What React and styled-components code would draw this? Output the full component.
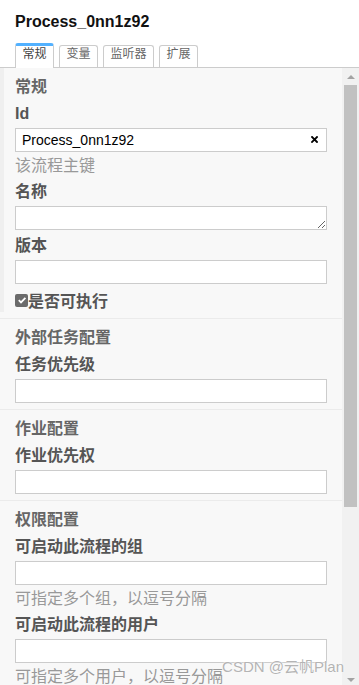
import React from "react";
import styled, { createGlobalStyle } from "styled-components";

const GlobalStyle = createGlobalStyle`
  html, body {
    margin: 0;
    padding: 0;
    background: #fff;
    overflow: hidden;
  }
  body {
    font-family: "Liberation Sans", "Noto Sans CJK SC", sans-serif;
  }
  * { box-sizing: border-box; }
`;

const Panel = styled.div`
  position: relative;
  height: 688px;
  display: flex;
  flex-direction: column;
  overflow: hidden;
`;

const Header = styled.div`
  padding: 13px 15px 0;
`;

const Title = styled.div`
  font-size: 16px;
  line-height: 18px;
  font-weight: bold;
  color: #111;
  margin-bottom: 12px;
`;

const TabBar = styled.div`
  display: flex;
  align-items: flex-end;
  gap: 5px;
  padding: 0 15px;
  border-bottom: 1px solid #ccc;
`;

const Tab = styled.div`
  font-size: 12px;
  line-height: 16px;
  padding: 0 6.5px ${(p) => (p.$active ? "6px" : "5px")};
  margin-bottom: ${(p) => (p.$active ? "-1px" : "0")};
  border: 1px solid #ccc;
  border-top: ${(p) => (p.$active ? "3px solid #52b1ff" : "1px solid #ccc")};
  border-bottom: none;
  border-radius: 3px 3px 0 0;
  background: #fff;
  color: ${(p) => (p.$active ? "#444" : "#666")};
`;

const Body = styled.div`
  flex: 1;
  min-height: 0;
  display: flex;
  background: #f8f8f8;
`;

const Content = styled.div`
  flex: 1;
  min-width: 0;
  overflow: hidden;
`;

const Group = styled.div`
  display: flex;
  border-bottom: 1px solid #ebebeb;
`;

const Toggle = styled.div`
  width: 4px;
  flex-shrink: 0;
  margin-bottom: 6px;
  background: ${(p) => (p.$active ? "#efefef" : "transparent")};
`;

const GroupBody = styled.div`
  flex: 1;
  min-width: 0;
  padding: 9px 15px 6px 11px;
`;

const GroupLabel = styled.div`
  font-size: 16px;
  line-height: 20px;
  font-weight: bold;
  color: #666;
  margin-bottom: 7px;
`;

const Entry = styled.div`
  margin-bottom: 6px;
  &:last-child { margin-bottom: 0; }
`;

const Label = styled.label`
  display: block;
  font-size: 16px;
  line-height: 20px;
  font-weight: bold;
  color: #555;
  margin-bottom: 4px;
`;

const FieldWrap = styled.div`
  position: relative;
`;

const TextInput = styled.input`
  display: block;
  width: 100%;
  height: 24px;
  margin: 0;
  padding: 0 ${(p) => (p.$clearable ? "24px" : "6px")} 0 6px;
  border: 1px solid #ccc;
  border-radius: 0;
  background: #fff;
  font-family: "Liberation Sans", "Noto Sans CJK SC", sans-serif;
  font-size: 14px;
  color: #000;
  outline: none;
`;

const TextArea = styled.textarea`
  display: block;
  width: 100%;
  height: 24px;
  margin: 0;
  padding: 2px 6px;
  border: 1px solid #ccc;
  border-radius: 0;
  background: #fff;
  font-family: "Liberation Sans", "Noto Sans CJK SC", sans-serif;
  font-size: 14px;
  resize: vertical;
  outline: none;
`;

const ClearButton = styled.span`
  position: absolute;
  right: 9px;
  top: 8px;
  width: 7px;
  height: 7px;
  display: flex;
`;

const Hint = styled.div`
  margin-top: 4px;
  font-size: 16px;
  line-height: 20px;
  color: #999;
`;

const CheckRow = styled.div`
  display: flex;
  align-items: center;
  height: 20px;
  margin: 3px 0 2px;
  font-size: 16px;
  font-weight: bold;
  color: #555;
`;

const CheckBox = styled.span`
  width: 13px;
  height: 13px;
  border-radius: 2px;
  background: #6b6b6b;
  display: flex;
  align-items: center;
  justify-content: center;
  flex-shrink: 0;
`;

const ScrollTrack = styled.div`
  width: 17px;
  flex-shrink: 0;
  display: flex;
  flex-direction: column;
  background: #f1f1f1;
`;

const ScrollButton = styled.div`
  height: 17px;
  display: flex;
  align-items: center;
  justify-content: center;
  &::after {
    content: "";
    border-left: 4px solid transparent;
    border-right: 4px solid transparent;
    ${(p) => (p.$down ? "border-top" : "border-bottom")}: 4px solid #a3a3a3;
  }
`;

const ThumbArea = styled.div`
  flex: 1;
`;

const Thumb = styled.div`
  height: 422px;
  margin: 0 2px;
  background: #c1c1c1;
`;

const Watermark = styled.div`
  position: absolute;
  right: 15px;
  top: 657px;
  font-size: 15px;
  line-height: 20px;
  color: #b4b4b4;
  text-shadow: 0 0 2px #fff, 0 0 1px #fff;
  white-space: nowrap;
`;

const ClearIcon = () => (
  <svg width="7" height="7" viewBox="0 0 7 7">
    <path d="M1 1L6 6M6 1L1 6" stroke="#000" strokeWidth="1.8" strokeLinecap="square" />
  </svg>
);

const CheckIcon = () => (
  <svg width="10" height="10" viewBox="0 0 10 10">
    <path d="M1.8 5.2L4 7.4L8.4 2.8" stroke="#fff" strokeWidth="1.8" fill="none" />
  </svg>
);

const tabs = ["常规", "变量", "监听器", "扩展"];

const Field = ({ label, hint, value, clearable }) => (
  <Entry>
    <Label>{label}</Label>
    <FieldWrap>
      <TextInput defaultValue={value} $clearable={clearable} />
      {clearable && (
        <ClearButton>
          <ClearIcon />
        </ClearButton>
      )}
    </FieldWrap>
    {hint && <Hint>{hint}</Hint>}
  </Entry>
);

export default function App() {
  return (
    <Panel>
      <GlobalStyle />
      <Header>
        <Title>Process_0nn1z92</Title>
      </Header>
      <TabBar>
        {tabs.map((t, i) => (
          <Tab key={t} $active={i === 0}>
            {t}
          </Tab>
        ))}
      </TabBar>

      <Body>
        <Content>
          <Group>
            <Toggle $active />
            <GroupBody>
              <GroupLabel>常规</GroupLabel>
              <Field label="Id" value="Process_0nn1z92" hint="该流程主键" clearable />
              <Entry>
                <Label>名称</Label>
                <TextArea />
              </Entry>
              <Field label="版本" />
              <Entry>
                <CheckRow>
                  <CheckBox>
                    <CheckIcon />
                  </CheckBox>
                  是否可执行
                </CheckRow>
              </Entry>
            </GroupBody>
          </Group>

          <Group>
            <Toggle />
            <GroupBody>
              <GroupLabel>外部任务配置</GroupLabel>
              <Field label="任务优先级" />
            </GroupBody>
          </Group>

          <Group>
            <Toggle />
            <GroupBody>
              <GroupLabel>作业配置</GroupLabel>
              <Field label="作业优先权" />
            </GroupBody>
          </Group>

          <Group>
            <Toggle />
            <GroupBody>
              <GroupLabel>权限配置</GroupLabel>
              <Field label="可启动此流程的组" hint="可指定多个组，以逗号分隔" />
              <Field label="可启动此流程的用户" hint="可指定多个用户，以逗号分隔" />
            </GroupBody>
          </Group>
        </Content>

        <ScrollTrack>
          <ScrollButton />
          <ThumbArea>
            <Thumb />
          </ThumbArea>
          <ScrollButton $down />
        </ScrollTrack>
      </Body>

      <Watermark>CSDN @云帆Plan</Watermark>
    </Panel>
  );
}
